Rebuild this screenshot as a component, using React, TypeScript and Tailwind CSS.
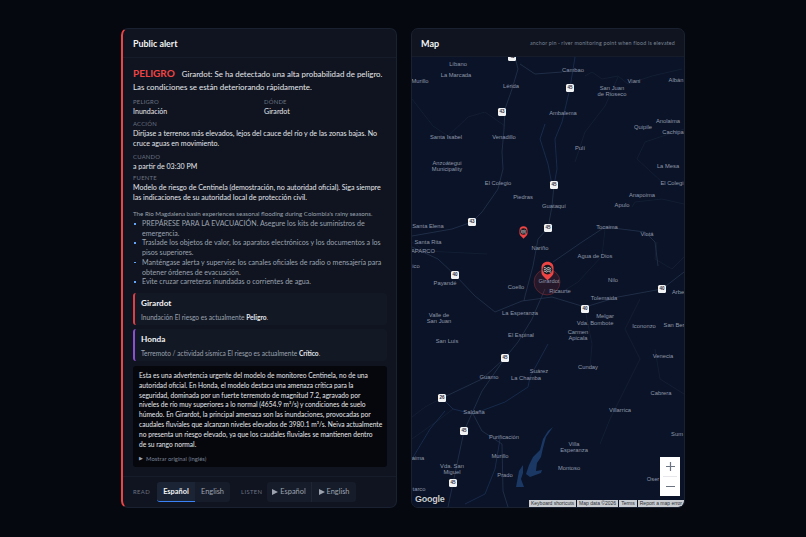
const FONT = "font-['Lato',sans-serif]";

type MapLabel = { x: number; y: number; text: string };

// page coordinates, converted against the map origin
const MAP_X = 412;
const MAP_Y = 58;

const PLACES: MapLabel[] = [
  { x: 458, y: 65, text: "Líbano" },
  { x: 456, y: 76, text: "La Marcada" },
  { x: 420, y: 82, text: "Murillo" },
  { x: 511, y: 87, text: "Lérida" },
  { x: 573, y: 71, text: "Cambao" },
  { x: 612, y: 92, text: "San Juan\nde Rioseco" },
  { x: 634, y: 82, text: "Viani" },
  { x: 676, y: 81, text: "Albán" },
  { x: 563, y: 114, text: "Ambalema" },
  { x: 668, y: 122, text: "Anolaima" },
  { x: 643, y: 128, text: "Quipile" },
  { x: 673, y: 133, text: "Cachipa" },
  { x: 446, y: 138, text: "Santa Isabel" },
  { x: 504, y: 138, text: "Venadillo" },
  { x: 580, y: 149, text: "Pulí" },
  { x: 447, y: 167, text: "Anzoátegui\nMunicipality" },
  { x: 668, y: 167, text: "La Mesa" },
  { x: 498, y: 184, text: "El Colegio" },
  { x: 672, y: 184, text: "El Colegi" },
  { x: 523, y: 198, text: "Piedras" },
  { x: 554, y: 207, text: "Guataquí" },
  { x: 642, y: 196, text: "Anapoima" },
  { x: 622, y: 206, text: "Apulo" },
  { x: 428, y: 227, text: "Santa Elena" },
  { x: 607, y: 228, text: "Tocaima" },
  { x: 647, y: 235, text: "Viotá" },
  { x: 428, y: 243, text: "Santa Rita" },
  { x: 540, y: 249, text: "Nariño" },
  { x: 423, y: 252, text: "APARCO" },
  { x: 416, y: 267, text: "ico" },
  { x: 595, y: 257, text: "Agua de Dios" },
  { x: 445, y: 284, text: "Payandé" },
  { x: 549, y: 282, text: "Girardot" },
  { x: 613, y: 281, text: "Nilo" },
  { x: 678, y: 293, text: "Arbe" },
  { x: 516, y: 288, text: "Coello" },
  { x: 560, y: 292, text: "Ricaurte" },
  { x: 604, y: 299, text: "Tolemaida" },
  { x: 520, y: 314, text: "La Esperanza" },
  { x: 605, y: 317, text: "Melgar" },
  { x: 439, y: 319, text: "Valle de\nSan Juan" },
  { x: 595, y: 324, text: "Vda. Bombote" },
  { x: 644, y: 327, text: "Icononzo" },
  { x: 674, y: 326, text: "San Ber" },
  { x: 521, y: 336, text: "El Espinal" },
  { x: 578, y: 336, text: "Carmen\nApicala" },
  { x: 447, y: 342, text: "San Luis" },
  { x: 663, y: 357, text: "Venecia" },
  { x: 539, y: 372, text: "Suárez" },
  { x: 588, y: 368, text: "Cunday" },
  { x: 489, y: 378, text: "Guamo" },
  { x: 526, y: 379, text: "La Chamba" },
  { x: 661, y: 394, text: "Cabrera" },
  { x: 474, y: 413, text: "Saldaña" },
  { x: 620, y: 411, text: "Villarrica" },
  { x: 677, y: 435, text: "Sum" },
  { x: 504, y: 438, text: "Purificación" },
  { x: 574, y: 448, text: "Villa\nEsperanza" },
  { x: 500, y: 457, text: "Murillo" },
  { x: 418, y: 459, text: "aima" },
  { x: 452, y: 470, text: "Vda. San\nMiguel" },
  { x: 505, y: 476, text: "Prado" },
  { x: 569, y: 469, text: "Montoso" },
  { x: 653, y: 480, text: "Oser" },
  { x: 419, y: 490, text: "tarco" },
];

const SHIELDS: MapLabel[] = [
  { x: 512, y: 58, text: "43" },
  { x: 570, y: 89, text: "45" },
  { x: 502, y: 113, text: "43" },
  { x: 554, y: 186, text: "45" },
  { x: 472, y: 223, text: "43" },
  { x: 548, y: 229, text: "45" },
  { x: 455, y: 276, text: "40" },
  { x: 662, y: 290, text: "40" },
  { x: 585, y: 310, text: "40" },
  { x: 505, y: 359, text: "45" },
  { x: 442, y: 399, text: "26" },
  { x: 464, y: 432, text: "45" },
  { x: 453, y: 484, text: "45" },
];

const ROADS = [
  "515,58 518,70 512,90 505,110 504,130 502,153 503,170 498,190 482,213 472,223 452,230 412,237",
  "520,65 535,75 562,73",
  "545,290 532,320 518,343 505,359 482,392 464,432 453,484 448,508",
  "554,186 552,207 548,229 538,240 533,267 525,297 524,302",
  "412,248 438,260 455,276 475,297 495,313 522,302 552,298 585,308 618,298 662,290 684,273",
  "553,263 582,243 605,228 645,233 655,243 658,267",
  "442,399 482,380 505,359",
  "473,415 482,432 502,445 503,492 508,508",
];

const MINOR_ROADS = [
  "412,100 433,127 448,137 468,118 485,113 505,127",
  "585,77 592,73 602,80 618,77 628,85 652,77 682,70",
  "618,78 605,107 585,133 575,163",
  "684,130 645,143 637,160 662,183",
  "684,205 662,200 635,203 632,208",
  "605,230 602,257 578,283 562,293",
  "684,258 672,270 655,260 657,243",
  "412,243 425,252 487,255",
  "585,310 592,345 590,370",
  "640,300 625,330 640,360 610,420 600,445",
  "684,395 660,380 655,350",
  "412,418 425,408 442,399",
  "412,440 440,420 453,410",
];

const RIVERS = [
  "575,58 570,89 562,123 555,140 557,170 554,186",
  "545,125 540,140 548,165 552,186",
  "442,399 453,410 473,415 505,403 528,388 530,378 548,345",
  "412,460 430,430 445,412",
  "500,440 495,470 485,495 465,505",
];

const BULLETS = [
  "PREPÁRESE PARA LA EVACUACIÓN. Asegure los kits de suministros de emergencia.",
  "Traslade los objetos de valor, los aparatos electrónicos y los documentos a los pisos superiores.",
  "Manténgase alerta y supervise los canales oficiales de radio o mensajería para obtener órdenes de evacuación.",
  "Evite cruzar carreteras inundadas o corrientes de agua.",
];

const SUMMARY = [
  "Esta es una advertencia urgente del modelo de monitoreo Centinela, no de una",
  "autoridad oficial. En Honda, el modelo destaca una amenaza crítica para la",
  "seguridad, dominada por un fuerte terremoto de magnitud 7.2, agravado por",
  "niveles de río muy superiores a lo normal (4654.9 m³/s) y condiciones de suelo",
  "húmedo. En Girardot, la principal amenaza son las inundaciones, provocadas por",
  "caudales fluviales que alcanzan niveles elevados de 3980.1 m³/s. Neiva actualmente",
  "no presenta un riesgo elevado, ya que los caudales fluviales se mantienen dentro",
  "de su rango normal.",
];

function Field({ label, children, className }: { label: string; children: React.ReactNode; className?: string }) {
  return (
    <div className={className}>
      <div className="text-[5.9px] leading-[10px] tracking-[0.04em] text-[#6b7280] uppercase">{label}</div>
      <div className="text-[7.08px] leading-[10px] text-[#e5e7eb]">{children}</div>
    </div>
  );
}

function RiskCard({ name, hazard, level, bar }: { name: string; hazard: string; level: string; bar: string }) {
  return (
    <div className={`h-[32px] rounded-[3px] border-l-2 ${bar} bg-[#121824] pl-[6px] pt-[4px]`}>
      <div className="text-[8.2px] leading-[13px] font-bold text-[#f3f4f6]">{name}</div>
      <div className="mt-[2px] text-[6.6px] leading-[10px] text-[#9ca3af]">
        {hazard} El riesgo es actualmente <b className="font-bold text-[#e5e7eb]">{level}</b>.
      </div>
    </div>
  );
}

function AlertPanel() {
  return (
    <section className="flex h-[480px] w-[276px] flex-col overflow-hidden rounded-[7px] border border-l-2 border-[#1a2130] border-l-[#ef4444] bg-[#0f1420]">
      <header className="flex h-[29px] shrink-0 items-center border-b border-[#161c29] pl-[10px] pt-[2px] text-[8.9px] font-bold text-[#f3f4f6]">
        Public alert
      </header>
      <div className="flex-1 pl-[10px] pr-[9px] pt-[9px]">
        <p className="text-[7.9px] leading-[13px] text-[#e5e7eb]">
          <span className="mr-[7px] text-[10px] leading-[13px] font-bold text-[#ef4444]">PELIGRO</span>
          Girardot: Se ha detectado una alta probabilidad de peligro. Las condiciones se están deteriorando rápidamente.
        </p>
        <div className="mt-[3px] flex">
          <Field label="Peligro" className="w-[131px]">Inundación</Field>
          <Field label="Dónde">Girardot</Field>
        </div>
        <Field label="Acción" className="mt-[2px]">
          Diríjase a terrenos más elevados, lejos del cauce del río y de las zonas bajas. No cruce aguas en movimiento.
        </Field>
        <Field label="Cuando" className="mt-[3px]">a partir de 03:30 PM</Field>
        <Field label="Fuente" className="mt-[1px]">
          Modelo de riesgo de Centinela (demostración, no autoridad oficial). Siga siempre las indicaciones de su autoridad local de protección civil.
        </Field>
        <p className="mt-[6px] text-[6.2px] leading-[10px] text-[#9ca3af]">
          The Río Magdalena basin experiences seasonal flooding during Colombia's rainy seasons.
        </p>
        <ul className="text-[7.08px] leading-[9.7px] text-[#9ca3af]">
          {BULLETS.map((b) => (
            <li key={b} className="relative pl-[9px]">
              <span className="absolute left-[1px] top-[4px] h-[1.5px] w-[1.5px] bg-[#60a5fa]" />
              {b}
            </li>
          ))}
        </ul>
        <div className="mt-[6px] flex flex-col gap-[4px]">
          <RiskCard name="Girardot" hazard="Inundación" level="Peligro" bar="border-[#dc3f46]" />
          <RiskCard name="Honda" hazard="Terremoto / actividad sísmica" level="Crítico" bar="border-[#8b4fd0]" />
        </div>
        <div className="mt-[5px] h-[101px] rounded-[3px] bg-[#05070d] px-[6px] pt-[5px]">
          <div className="text-[6.65px] leading-[9.85px] whitespace-nowrap text-[#e5e7eb]">
            {SUMMARY.map((line) => (
              <p key={line}>{line}</p>
            ))}
          </div>
          <div className="mt-[4px] flex items-center gap-[3px] text-[5.9px] leading-[9px] text-[#7b8494]">
            <span className="text-[5px] text-[#9ca3af]">▶</span> Mostrar original (inglés)
          </div>
        </div>
      </div>
      <footer className="flex h-[31px] shrink-0 items-center border-t border-[#161c29] pl-[10px]">
        <span className="w-[24px] text-[5.9px] tracking-[0.06em] text-[#6b7280]">READ</span>
        <div className="flex h-[20px] w-[73px] rounded-[3px] bg-[#161c29] text-[7.4px]">
          <span className="flex w-[38px] items-center justify-center rounded-l-[3px] border-b border-[#3b82f6] bg-[#1a2434] font-bold text-[#f3f4f6]">Español</span>
          <span className="flex flex-1 items-center justify-center text-[#9ca3af]">English</span>
        </div>
        <span className="ml-[11px] w-[26px] text-[5.9px] tracking-[0.06em] text-[#6b7280]">LISTEN</span>
        <div className="flex h-[20px] w-[89px] rounded-[3px] bg-[#161c29] text-[7.4px] text-[#9ca3af]">
          <span className="flex w-[45px] items-center justify-center gap-[2px] border-r border-[#1f2735]"><Play />Español</span>
          <span className="flex flex-1 items-center justify-center gap-[2px]"><Play />English</span>
        </div>
      </footer>
    </section>
  );
}

function Play() {
  return (
    <svg width="6" height="6" viewBox="0 0 6 6">
      <path d="M0 0 L6 3 L0 6 Z" fill="#9ca3af" />
    </svg>
  );
}

function Pin({ large }: { large?: boolean }) {
  return (
    <svg width={large ? 13 : 9} height={large ? 20 : 13} viewBox="0 0 14 21">
      <path d="M7 0.5 C3 0.5 0.5 3 0.5 7 L0.5 12 C0.5 15.5 5 18 7 20.5 C9 18 13.5 15.5 13.5 12 L13.5 7 C13.5 3 11 0.5 7 0.5 Z" fill="#ef4444" />
      <circle cx="7" cy="9" r="5.2" fill="#17181f" />
      <path d="M3 7.2 q1 -1 2 0 t2 0 t2 0 t2 0 M3 9.2 q1 -1 2 0 t2 0 t2 0 t2 0 M3 11.2 q1 -1 2 0 t2 0 t2 0 t2 0" fill="none" stroke="#f3f4f6" strokeWidth="0.9" />
    </svg>
  );
}

function MapPanel() {
  return (
    <section className="flex h-[480px] w-[274px] flex-col overflow-hidden rounded-[7px] border border-[#1a2130] bg-[#0f1420]">
      <header className="flex h-[28px] shrink-0 items-center justify-between border-b border-[#161c29] pl-[9px] pr-[9px] pt-[2px]">
        <span className="text-[9px] font-bold text-[#f3f4f6]">Map</span>
        <span className="text-[5.3px] tracking-[0.04em] text-[#7b8494]">anchor pin · river monitoring point when flood is elevated</span>
      </header>
      <div className="relative flex-1 overflow-hidden bg-[#0a1327]">
        <svg className="absolute inset-0 h-full w-full" viewBox={`${MAP_X} ${MAP_Y} 272 450`}>
          {MINOR_ROADS.map((p) => (
            <polyline key={p} points={p} fill="none" stroke="#17233a" strokeWidth="0.7" />
          ))}
          {RIVERS.map((p) => (
            <polyline key={p} points={p} fill="none" stroke="#1c3054" strokeWidth="0.8" />
          ))}
          {ROADS.map((p) => (
            <polyline key={p} points={p} fill="none" stroke="#26344e" strokeWidth="0.8" />
          ))}
          <polygon points="553,428 548,432 543,440 540,451 533,458 529,466 526,475 530,478 541,474 542,471 536,472 537,464 541,458 543,449 546,438" fill="#1b3763" />
          <polygon points="523,466 519,472 516,488 524,488 521,480 523,474" fill="#1b3763" />
          <circle cx="547" cy="283" r="13" fill="#ef4444" fillOpacity="0.12" stroke="#ef4444" strokeOpacity="0.35" strokeWidth="0.8" />
        </svg>
        {PLACES.map((l) => (
          <span
            key={`${l.text}${l.x}`}
            className="absolute -translate-x-1/2 -translate-y-1/2 whitespace-pre text-center font-['Liberation_Sans',sans-serif] text-[5.8px] leading-[6px] text-[#8f98aa]"
            style={{ left: l.x - MAP_X, top: l.y - MAP_Y }}
          >
            {l.text}
          </span>
        ))}
        {SHIELDS.map((s) => (
          <span
            key={`${s.text}${s.x}`}
            className="absolute flex h-[8px] w-[8px] -translate-x-1/2 -translate-y-1/2 items-center justify-center rounded-[1.5px] bg-[#f1f2f4] font-['Liberation_Sans',sans-serif] text-[4.5px] font-bold text-[#1f2937]"
            style={{ left: s.x - MAP_X, top: s.y - MAP_Y }}
          >
            {s.text}
          </span>
        ))}
        <div className="absolute left-[107px] top-[169px]"><Pin /></div>
        <div className="absolute left-[129px] top-[204px]"><Pin large /></div>
        <div className="absolute left-[248px] top-[400px] flex h-[39px] w-[20px] flex-col items-center bg-white text-[#6b7280]">
          <svg className="mt-[5px]" width="9" height="9" viewBox="0 0 9 9"><path d="M4.5 0 V9 M0 4.5 H9" stroke="#6b7280" strokeWidth="1.2" /></svg>
          <span className="mt-[5px] h-px w-[14px] bg-[#e5e7eb]" />
          <svg className="mt-[5px]" width="9" height="9" viewBox="0 0 9 9"><path d="M0 4.5 H9" stroke="#6b7280" strokeWidth="1.2" /></svg>
        </div>
        <span className="absolute bottom-[2px] left-[3px] font-['Liberation_Sans',sans-serif] text-[9px] leading-[11px] font-bold tracking-[-0.03em] text-[#c8ccd2] [text-shadow:0_0_1.5px_#000]">Google</span>
        <div className="absolute bottom-0 right-0 flex h-[7px] items-center gap-px font-['Liberation_Sans',sans-serif] text-[5px] leading-[7px] whitespace-nowrap text-[#2b2f36]">
          <span className="bg-[#c9ccd1] px-[2px]">Keyboard shortcuts</span>
          <span className="bg-[#c9ccd1] px-[2px]">Map data ©2026</span>
          <span className="bg-[#c9ccd1] px-[2px]">Terms</span>
          <span className="rounded-br-[5px] bg-[#c9ccd1] px-[2px]">Report a map error</span>
        </div>
      </div>
    </section>
  );
}

export default function App() {
  return (
    <div className={`flex h-[537px] w-[806px] gap-[14px] overflow-hidden bg-[#05080f] pl-[121px] pt-[28px] ${FONT}`}>
      <AlertPanel />
      <MapPanel />
    </div>
  );
}
